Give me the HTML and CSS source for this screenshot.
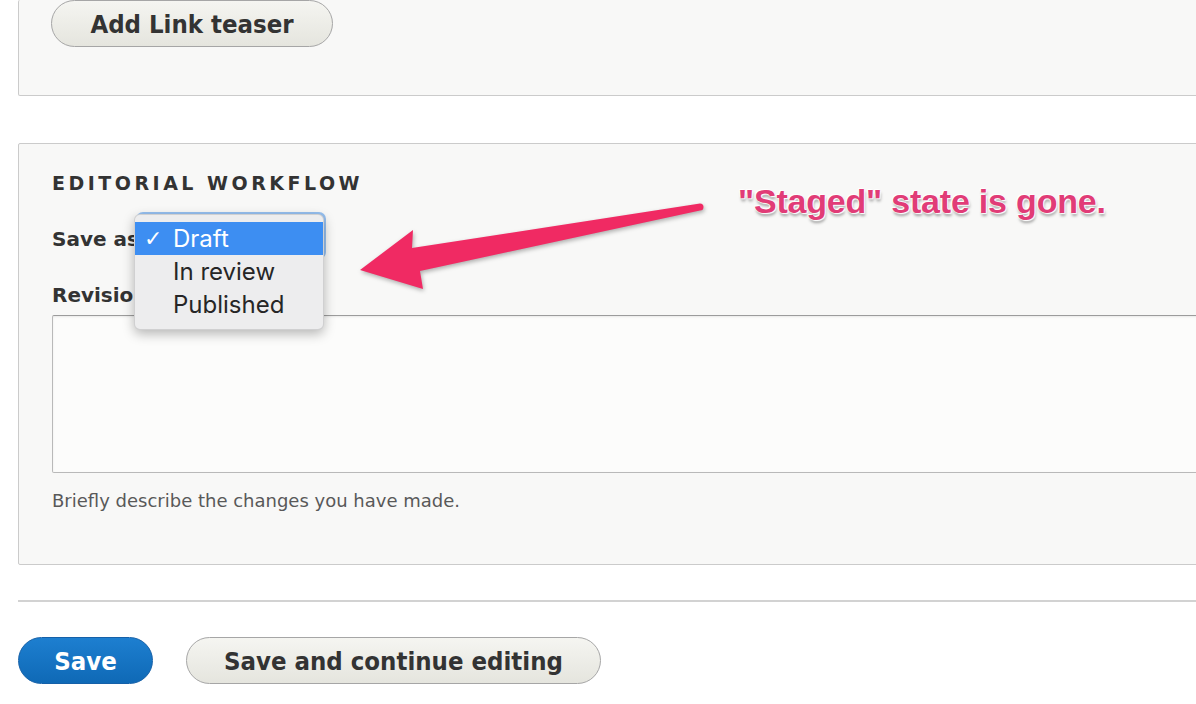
FILE: index.html
```html
<!DOCTYPE html>
<html lang="en">
<head>
<meta charset="utf-8">
<title>Editorial workflow</title>
<link rel="stylesheet" href="styles.css">
</head>
<body>
<div class="page">
  <section class="panel panel-top">
    <button class="btn btn-add" type="button">Add Link teaser</button>
  </section>

  <section class="panel panel-workflow">
    <h2 class="legend">Editorial workflow</h2>
    <div class="field-row">
      <label class="label label-save">Save as</label>
      <div class="select"></div>
      <ul class="menu">
        <li class="opt active"><span class="check">✓</span>Draft</li>
        <li class="opt">In review</li>
        <li class="opt">Published</li>
      </ul>
    </div>
    <label class="label label-rev">Revision log message</label>
    <div class="textarea"></div>
    <p class="desc">Briefly describe the changes you have made.</p>
  </section>

  <div class="sep"></div>

  <div class="actions">
    <button class="btn btn-primary" type="button">Save</button>
    <button class="btn btn-wide" type="button">Save and continue editing</button>
  </div>

  <svg class="arrow" width="1196" height="704" viewBox="0 0 1196 704" aria-hidden="true">
    <path d="M700 203.5 L412 248 L413 230 L360 270 L423 289 L420 271 L700 210.5 A3.5 3.5 0 0 0 700 203.5 Z" fill="#f02a63"/>
  </svg>
  <div class="note">"Staged" state is gone.</div>
</div>
</body>
</html>
```

FILE: styles.css
```css
* { box-sizing: border-box; }

html, body {
  margin: 0;
  padding: 0;
  background: #ffffff;
}

body {
  width: 1196px;
  height: 704px;
  overflow: hidden;
  font-family: "DejaVu Sans", "Liberation Sans", sans-serif;
  color: #333333;
}

.page {
  position: relative;
  height: 704px;
}

.panel {
  margin-left: 18px;
  margin-right: -30px;
  background: #f8f8f7;
  border: 1px solid #cbcbcb;
  border-radius: 2px;
}

.panel-top {
  border-top: none;
  padding: 0 0 48px 32px;
}

.btn {
  display: inline-flex;
  align-items: center;
  justify-content: center;
  height: 47px;
  padding: 0;
  font-family: "DejaVu Sans Condensed", "DejaVu Sans", sans-serif;
  font-weight: bold;
  font-size: 25.5px;
  color: #333333;
  border: 1px solid #a6a6a6;
  border-radius: 24px;
  background: linear-gradient(#f5f5f1, #e5e5de);
}

.btn-add { width: 282px; }

.panel-workflow {
  margin-top: 47px;
  padding: 28px 0 52px 33px;
}

.legend {
  margin: 0;
  font-size: 19px;
  line-height: 22px;
  font-weight: bold;
  text-transform: uppercase;
  letter-spacing: 3.5px;
  color: #333333;
}

.field-row {
  position: relative;
  display: flex;
  align-items: flex-start;
  margin-top: 18px;
  height: 45px;
}

.label {
  display: block;
  font-size: 20px;
  line-height: 24px;
  font-weight: bold;
  color: #333333;
  white-space: nowrap;
}

.label-save {
  padding-top: 15px;
  flex: 0 0 86px;
}

.select {
  width: 184px;
  height: 41px;
  margin-top: 3px;
  border: 1px solid #8fb5e6;
  border-radius: 4px;
  background: #f3f3f3;
  box-shadow: 0 0 0 3px rgba(70, 145, 235, 0.55);
}

.menu {
  position: absolute;
  left: 82px;
  top: 2px;
  width: 190px;
  margin: 0;
  padding: 7px 0 8px;
  list-style: none;
  background: #ededee;
  border: 1px solid rgba(0, 0, 0, 0.12);
  border-radius: 6px;
  box-shadow: 0 4px 12px rgba(0, 0, 0, 0.28);
  z-index: 2;
}

.opt {
  position: relative;
  height: 33px;
  padding-left: 38px;
  font-family: "Inter", "Liberation Sans", sans-serif;
  font-size: 24px;
  line-height: 33px;
  color: #262626;
}

.opt.active {
  background: #3d8ef2;
  color: #ffffff;
}

.check {
  position: absolute;
  left: 9px;
  top: 0;
  font-family: "DejaVu Sans", sans-serif;
  font-weight: bold;
  font-size: 22px;
}

.label-rev {
  margin-top: 26px;
}

.textarea {
  margin-top: 8px;
  height: 158px;
  border: 1px solid #b9b9b9;
  border-top-color: #9c9c9c;
  border-radius: 2px;
  background: #fcfcfb;
  box-shadow: inset 0 1px 2px rgba(0, 0, 0, 0.08);
}

.desc {
  margin: 17px 0 0;
  font-size: 18px;
  line-height: 22px;
  color: #595959;
}

.sep {
  margin: 35px 0 0 18px;
  border-top: 2px solid #d2d2d2;
}

.actions {
  display: flex;
  gap: 33px;
  margin: 35px 0 0 18px;
}

.btn-primary {
  width: 135px;
  color: #ffffff;
  border-color: #1560a8;
  background: linear-gradient(#1d7fd0, #0f69b6);
}

.btn-wide { width: 415px; }

.arrow {
  position: absolute;
  left: 0;
  top: 0;
  filter: drop-shadow(1px 2px 2px rgba(0, 0, 0, 0.3));
  pointer-events: none;
}

.note {
  position: absolute;
  left: 738px;
  top: 182px;
  font-family: "Liberation Sans", Arial, sans-serif;
  font-weight: bold;
  font-size: 34px;
  line-height: 38px;
  letter-spacing: -0.2px;
  color: #e13c77;
  text-shadow:
    0 0 1px #fff, 0 0 2px #fff, 1px 1px 1px #fff, -1px -1px 1px #fff,
    1px 3px 3px rgba(0, 0, 0, 0.35);
  white-space: nowrap;
}
```
